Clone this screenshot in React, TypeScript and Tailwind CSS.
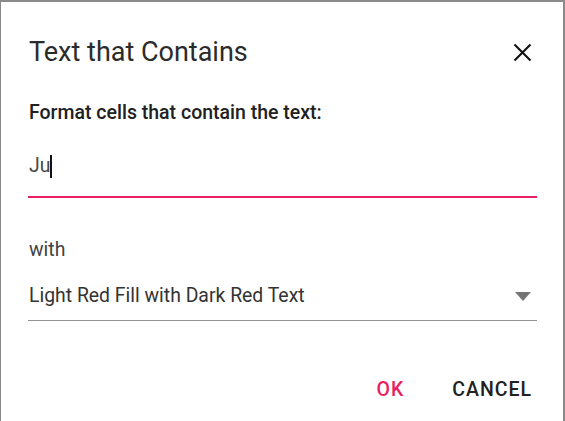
import React from "react";

export default function App() {
  return (
    <div
      className="w-[565px] h-[421px] bg-[#8a8a8a] overflow-hidden pt-[2px] pl-[1px]"
      style={{ fontFamily: "Roboto, 'Liberation Sans', sans-serif" }}
    >
      <div className="w-[562px] h-[419px] bg-white pl-[27px] pr-[26px] pt-[34px] flex flex-col">
        <div className="flex items-center justify-between h-[32px]">
          <div className="text-[27px] leading-[32px] text-[#2b2b2b] font-normal pl-[1px]">
            Text that Contains
          </div>
          <svg width="19" height="19" viewBox="0 0 19 19" className="mr-[5px]">
            <path d="M1.5 1.5 L17.5 17.5 M17.5 1.5 L1.5 17.5" stroke="#111" strokeWidth="2.1" fill="none" />
          </svg>
        </div>
        <div className="mt-[33px] text-[19.5px] leading-[24px] font-medium text-[#212121] pl-[1px]">
          Format cells that contain the text:
        </div>
        <div className="mt-[29px] border-b-2 border-[#e91e63] pb-[18px] pl-[1px]">
          <div className="text-[19.4px] leading-[24px] text-[#484848] flex items-center">
            <span>Ju</span>
            <span className="inline-block w-[2px] h-[23px] bg-[#111]" />
          </div>
        </div>
        <div className="mt-[40px] text-[19.4px] leading-[24px] text-[#424242] pl-[1px]">with</div>
        <div className="mt-[22px] border-b border-[#949494] pb-[12px] flex items-center justify-between pl-[1px]">
          <span className="text-[19.4px] leading-[24px] text-[#333333]">
            Light Red Fill with Dark Red Text
          </span>
          <svg width="16" height="9" viewBox="0 0 16 9" className="mr-[6px]">
            <polygon points="0,0 16,0 8,9" fill="#757575" />
          </svg>
        </div>
        <div className="mt-[57px] flex justify-end items-center gap-[48px] pr-[5px]">
          <span className="text-[19.5px] leading-[24px] font-medium text-[#e91e63] tracking-[1px]">OK</span>
          <span className="text-[19.5px] leading-[24px] font-medium text-[#212121] tracking-[1px]">CANCEL</span>
        </div>
      </div>
    </div>
  );
}
